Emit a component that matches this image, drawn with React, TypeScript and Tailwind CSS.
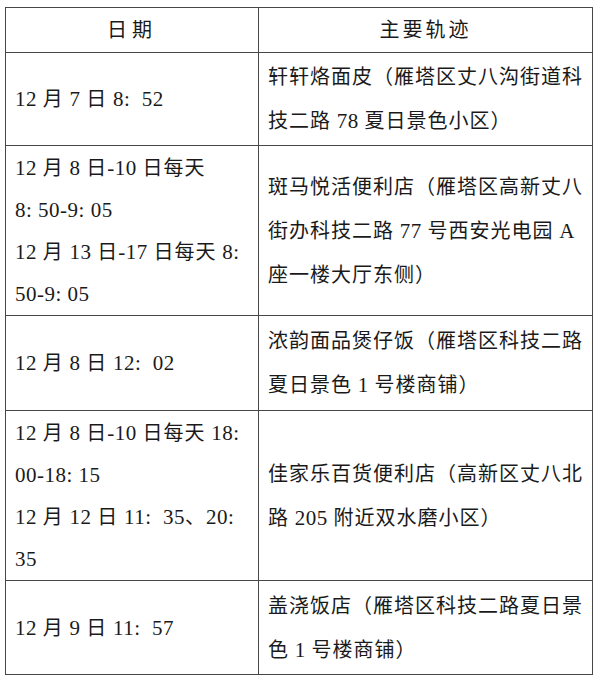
import React from "react";

const font = {
  fontFamily: '"Liberation Serif", "Noto Sans CJK SC", serif',
};

type Row = { h: string; left: string[]; right: string[] };

const rows: Row[] = [
  {
    h: "h-[93px]",
    left: ["12 月 7 日 8:  52"],
    right: ["轩轩烙面皮（雁塔区丈八沟街道科", "技二路 78 夏日景色小区）"],
  },
  {
    h: "h-[170px]",
    left: ["12 月 8 日-10 日每天", "8: 50-9: 05", "12 月 13 日-17 日每天 8:", "50-9: 05"],
    right: ["斑马悦活便利店（雁塔区高新丈八", "街办科技二路 77 号西安光电园 A", "座一楼大厅东侧）"],
  },
  {
    h: "h-[95px]",
    left: ["12 月 8 日 12:  02"],
    right: ["浓韵面品煲仔饭（雁塔区科技二路", "夏日景色 1 号楼商铺）"],
  },
  {
    h: "h-[170px]",
    left: ["12 月 8 日-10 日每天 18:", "00-18: 15", "12 月 12 日 11:  35、20:", "35"],
    right: ["佳家乐百货便利店（高新区丈八北", "路 205 附近双水磨小区）"],
  },
  {
    h: "h-[93px]",
    left: ["12 月 9 日 11:  57"],
    right: ["盖浇饭店（雁塔区科技二路夏日景", "色 1 号楼商铺）"],
  },
];

function Line({ text }: { text: string }) {
  const parts = text.split(/([\x00-\x7F]+)/).filter((p) => p.length > 0);
  return (
    <div className="whitespace-pre">
      {parts.map((p, k) =>
        /^[\x00-\x7F]+$/.test(p) ? (
          <span key={k} className="text-[21px] tracking-[0.5px]">
            {p}
          </span>
        ) : (
          <span key={k}>{p}</span>
        )
      )}
    </div>
  );
}

export default function App() {
  return (
    <div className="w-[598px] h-[682px] bg-white text-[#1a1a1a]" style={font}>
      <div className="pt-[7px] pl-[5px]">
        <div className="w-[588px] border border-[#474747] text-[20px] tracking-[1px]">
          <div className="flex h-[45px] border-b border-[#474747]">
            <div className="w-[253px] border-r border-[#474747] flex items-center justify-center tracking-[5px]">
              日期
            </div>
            <div className="flex-1 flex items-center justify-center tracking-[3px]">
              主要轨迹
            </div>
          </div>
          {rows.map((r, i) => (
            <div
              key={i}
              className={`flex ${r.h} ${i < rows.length - 1 ? "border-b border-[#474747]" : ""}`}
            >
              <div className="w-[253px] border-r border-[#474747] flex flex-col justify-center pl-[9px] leading-[42px]">
                {r.left.map((t, j) => (
                  <Line key={j} text={t} />
                ))}
              </div>
              <div className="flex-1 flex flex-col justify-center pl-[9px] leading-[44px]">
                {r.right.map((t, j) => (
                  <Line key={j} text={t} />
                ))}
              </div>
            </div>
          ))}
        </div>
      </div>
    </div>
  );
}
